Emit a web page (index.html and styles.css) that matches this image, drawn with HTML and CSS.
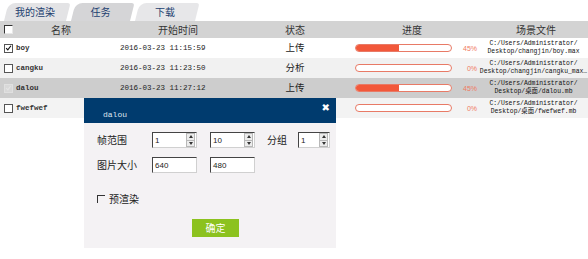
FILE: index.html
```html
<!DOCTYPE html>
<html>
<head>
<meta charset="utf-8">
<link rel="stylesheet" href="styles.css">
</head>
<body>
<div class="page">
  <div class="tabs">
    <div class="tab t1"><span>我的渲染</span></div>
    <div class="tab t2 active"><span>任务</span></div>
    <div class="tab t3"><span>下载</span></div>
  </div>
  <div class="grid head">
    <div class="c-check"><span class="cb3d"></span></div>
    <div class="h-name h">名称</div>
    <div class="h-time h">开始时间</div>
    <div class="h-status h">状态</div>
    <div class="h-prog h">进度</div>
    <div class="h-file h">场景文件</div>
  </div>
  <div class="grid row r1">
    <div class="c-check"><span class="cb checked"><svg viewBox="0 0 8 8" width="8" height="8"><path d="M1.3 4.2 L3.2 6.2 L6.8 1.4" fill="none" stroke="#111" stroke-width="1.3"/></svg></span></div>
    <div class="c-name mono">boy</div>
    <div class="c-time mono">2016-03-23 11:15:59</div>
    <div class="c-status st">上传</div>
    <div class="c-prog"><div class="bar"><div class="fill" style="width:45%"></div></div><span class="pct">45%</span></div>
    <div class="c-file"><span>C:/Users/Administrator/</span><span>Desktop/changjin/boy.max</span></div>
  </div>
  <div class="grid row r2">
    <div class="c-check"><span class="cb"></span></div>
    <div class="c-name mono">cangku</div>
    <div class="c-time mono">2016-03-23 11:23:50</div>
    <div class="c-status st">分析</div>
    <div class="c-prog"><div class="bar"><div class="fill" style="width:0%"></div></div><span class="pct">0%</span></div>
    <div class="c-file"><span>C:/Users/Administrator/</span><span>Desktop/changjin/cangku_max…</span></div>
  </div>
  <div class="grid row r3">
    <div class="c-check"><span class="cb dis"><svg viewBox="0 0 8 8" width="8" height="8"><path d="M1.3 4.2 L3.2 6.2 L6.8 1.4" fill="none" stroke="#e4e4e4" stroke-width="1.2"/></svg></span></div>
    <div class="c-name mono">dalou</div>
    <div class="c-time mono">2016-03-23 11:27:12</div>
    <div class="c-status st">上传</div>
    <div class="c-prog"><div class="bar"><div class="fill" style="width:45%"></div></div><span class="pct">45%</span></div>
    <div class="c-file"><span>C:/Users/Administrator/</span><span>Desktop/桌面/dalou.mb</span></div>
  </div>
  <div class="grid row r4">
    <div class="c-check"><span class="cb"></span></div>
    <div class="c-name mono">fwefwef</div>
    <div class="c-time mono"></div>
    <div class="c-status st"></div>
    <div class="c-prog"><div class="bar"><div class="fill" style="width:0%"></div></div><span class="pct">0%</span></div>
    <div class="c-file"><span>C:/Users/Administrator/</span><span>Desktop/桌面/fwefwef.mb</span></div>
  </div>

  <div class="dialog">
    <div class="dlg-head">
      <span class="dlg-title">dalou</span>
      <span class="dlg-close">✖</span>
    </div>
    <div class="dlg-body">
      <div class="frow">
        <span class="lbl">帧范围</span>
        <span class="spin w45"><span class="val">1</span><span class="sbtn"><i class="up"></i><i class="dn"></i></span></span>
        <span class="spin w45 ml13"><span class="val">10</span><span class="sbtn"><i class="up"></i><i class="dn"></i></span></span>
        <span class="lbl2">分组</span>
        <span class="spin w32"><span class="val">1</span><span class="sbtn"><i class="up"></i><i class="dn"></i></span></span>
      </div>
      <div class="frow r-size">
        <span class="lbl">图片大小</span>
        <span class="inp w45"><span class="val">640</span></span>
        <span class="inp w45 ml13"><span class="val">480</span></span>
      </div>
      <div class="frow r-chk">
        <span class="cb3d small"></span><span class="chk-lbl">预渲染</span>
      </div>
      <div class="frow r-btn">
        <span class="btn">确定</span>
      </div>
    </div>
  </div>
</div>
</body>
</html>
```

FILE: styles.css
```css
* { box-sizing: border-box; }
html, body { margin: 0; padding: 0; background: #fff; }
body {
  width: 588px; height: 259px; overflow: hidden;
  font-family: "Noto Sans CJK SC", "Liberation Sans", sans-serif;
  color: #222;
}
.page { position: relative; width: 588px; height: 259px; }

.tabs { display: flex; height: 21px; padding: 3px 0 0 2px; }
.tab {
  position: relative; height: 18px; width: 64px;
  display: flex; align-items: center; justify-content: center;
  font-size: 10px; color: #233f70; margin-right: 1px;
}
.tab::before {
  content: ""; position: absolute; inset: 0 2px 0 2px;
  background: #e3e3e5; border-radius: 7px 3px 0 0;
  transform: skewX(-14deg); transform-origin: bottom;
  z-index: 0;
}
.tab.active::before { background: #d5d5d7; }
.tab.t3::before { background: #e7e7e9; }
.tab span { position: relative; z-index: 1; line-height: 1; }
.tab.t1 { width: 66px; }
.tab.t2 { width: 63px; }
.tab.t3 { width: 64px; }

.grid {
  display: grid;
  grid-template-columns: 16px 90px 129px 120px 122px 1fr;
  align-items: center;
}
.head { height: 17px; background: #d3d3d3; }
.h { font-size: 10px; color: #333; line-height: 1; }
.h-name { text-align: center; }
.h-time { padding-left: 52px; }
.h-status { text-align: center; }
.h-prog { text-align: center; padding-right: 8px; }
.h-file { text-align: center; padding-left: 7px; }

.row { height: 20px; }
.r1 { background: #ffffff; }
.r2 { background: #f1f1f1; }
.r3 { background: #cdcdcd; }
.r4 { background: #f3f3f3; }

.c-check { display: flex; align-items: center; padding-left: 4px; }
.cb {
  display: inline-flex; width: 9px; height: 9px;
  border: 1px solid #555; background: #fff;
  align-items: center; justify-content: center;
}
.cb svg { display: block; }
.cb.dis { border-color: #e0e0e0; background: #d8d8d8; }
.cb3d {
  display: inline-block; width: 9px; height: 9px; background: #fff;
  border-top: 1px solid #333; border-left: 1px solid #333;
  border-right: 1px solid #e8e8e8; border-bottom: 1px solid #e8e8e8;
}
.mono { font-family: "Liberation Mono", "DejaVu Sans Mono", monospace; font-size: 7.5px; color: #222; }
.c-name.mono { padding-left: 0; font-weight: bold; color: #333; }
.c-time.mono { padding-left: 14px; }
.st { text-align: center; font-size: 9.5px; line-height: 1; }

.c-prog { display: flex; align-items: center; }
.bar {
  width: 97px; height: 8px; border: 1px solid #e87a66; border-radius: 4px;
  background: #fff; overflow: hidden;
}
.fill { height: 100%; background: #f2583a; }
.pct {
  font-size: 7px; color: #f07a62; width: 25px; text-align: right;
  font-family: "Liberation Sans", sans-serif;
}
.c-file {
  display: flex; flex-direction: column; align-items: center;
  font-family: "Liberation Mono", "Noto Sans CJK SC", monospace;
  font-size: 6.4px; line-height: 8px; color: #111; white-space: nowrap;
  overflow: hidden; padding-left: 2px;
}

.dialog {
  position: absolute; left: 84px; top: 98px; width: 252px; height: 150px;
  background: #f4f2f4; display: flex; flex-direction: column;
}
.dlg-head {
  height: 25px; background: #003b6e; display: flex; align-items: center;
  justify-content: space-between; padding: 0 6px 0 19px;
}
.dlg-title {
  font-family: "Liberation Mono", monospace; font-size: 8px; color: #dfe6f0;
  margin-top: 7px;
}
.dlg-close { color: #fff; font-size: 10px; font-weight: bold; margin-top: -6px; font-family: "DejaVu Sans", sans-serif; }
.dlg-body { padding: 9px 0 0 13px; display: flex; flex-direction: column; }
.frow { display: flex; align-items: center; height: 16px; }
.lbl { width: 55px; font-size: 10px; line-height: 1; color: #222; }
.lbl2 { width: 43px; padding-left: 12px; font-size: 10px; line-height: 1; color: #222; }
.spin, .inp {
  display: flex; align-items: center; height: 16px; background: #fff;
  border-top: 1px solid #444; border-left: 1px solid #444;
  border-right: 1px solid #d0d0d0; border-bottom: 1px solid #d0d0d0;
}
.w45 { width: 45px; }
.w32 { width: 32px; }
.ml13 { margin-left: 13px; }
.val { flex: 1; font-family: "Liberation Sans", sans-serif; font-size: 8px; color: #222; padding-left: 2px; }
.sbtn {
  width: 9px; height: 14px; margin-right: 1px; display: flex; flex-direction: column;
  border: 1px solid #b8b8b8; background: #ececec;
}
.sbtn i { flex: 1; display: flex; align-items: center; justify-content: center; }
.sbtn i.up { border-bottom: 1px solid #b8b8b8; }
.sbtn i::before {
  content: ""; width: 0; height: 0;
  border-left: 2px solid transparent; border-right: 2px solid transparent;
}
.sbtn i.up::before { border-bottom: 3px solid #333; }
.sbtn i.dn::before { border-top: 3px solid #333; }
.r-size { margin-top: 9px; }
.r-chk { margin-top: 20px; height: 12px; }
.cb3d.small { width: 8px; height: 8px; background: transparent; border-right: none; border-bottom: none; }
.chk-lbl { font-size: 10px; line-height: 1; margin-left: 4px; color: #222; }
.r-btn { margin-top: 14px; height: 18px; padding-left: 95px; }
.btn {
  width: 47px; height: 18px; background: #8cc21f; color: #fff; font-size: 10px;
  display: flex; align-items: center; justify-content: center; line-height: 1;
}
```
